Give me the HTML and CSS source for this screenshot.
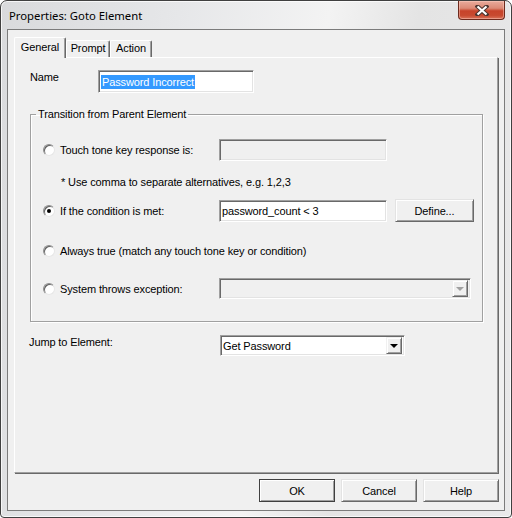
FILE: index.html
```html
<!DOCTYPE html>
<html lang="en">
<head>
    <meta charset="UTF-8">
    <meta name="viewport" content="width=device-width, initial-scale=1.0">
    <title>Properties: Goto Element</title>
    <link rel="stylesheet" href="styles.css">
</head>
<body>

    <div class="window">
        <div class="titlebar">
            <span class="title">Properties: Goto Element</span>
            <button class="close-btn" title="Close">
                <svg width="14" height="11" viewBox="0 0 14 11">
                    <path d="M2.5 1.5 L11.5 9.5 M11.5 1.5 L2.5 9.5" stroke="#4b3530" stroke-width="4.2" stroke-linecap="square"/>
                    <path d="M2.5 1.5 L11.5 9.5 M11.5 1.5 L2.5 9.5" stroke="#fff" stroke-width="2.2"/>
                </svg>
            </button>
        </div>

        <div class="client">
            <div class="tabs">
                <div class="tab active">General</div>
                <div class="tab">Prompt</div>
                <div class="tab">Action</div>
            </div>

            <div class="panel">
                <div class="name-row">
                    <span class="name-label">Name</span>
                    <div class="field name-field"><span class="selected">Password Incorrect</span></div>
                </div>

                <fieldset class="group">
                    <legend>Transition from Parent Element</legend>

                    <div class="opt-row row-touch">
                        <span class="radio"></span>
                        <span class="opt-label">Touch tone key response is:</span>
                        <div class="field text-field disabled"></div>
                    </div>

                    <div class="note">* Use comma to separate alternatives, e.g. 1,2,3</div>

                    <div class="opt-row row-cond">
                        <span class="radio checked"></span>
                        <span class="opt-label">If the condition is met:</span>
                        <div class="field text-field">password_count &lt; 3</div>
                        <button class="btn define-btn">Define...</button>
                    </div>

                    <div class="opt-row row-always">
                        <span class="radio"></span>
                        <span class="opt-label wide">Always true (match any touch tone key or condition)</span>
                    </div>

                    <div class="opt-row row-except">
                        <span class="radio"></span>
                        <span class="opt-label">System throws exception:</span>
                        <div class="field combo exception-combo disabled">
                            <span class="combo-text"></span>
                            <span class="combo-arrow"></span>
                        </div>
                    </div>
                </fieldset>

                <div class="jump-row">
                    <span class="jump-label">Jump to Element:</span>
                    <div class="field combo jump-combo">
                        <span class="combo-text">Get Password</span>
                        <span class="combo-arrow"></span>
                    </div>
                </div>
            </div>

            <div class="buttons">
                <button class="btn dlg-btn default">OK</button>
                <button class="btn dlg-btn">Cancel</button>
                <button class="btn dlg-btn">Help</button>
            </div>
        </div>
    </div>

</body>
</html>
```

FILE: styles.css
```css
* { box-sizing: border-box; }
body { margin: 0; font-family: "Liberation Sans", Arial, sans-serif; font-size: 11px; letter-spacing: -0.12px; color: #000; background: #fff; }

/* window frame */
.window { width: 512px; height: 518px; border: 1px solid #404040; border-radius: 7px 7px 4px 4px; padding: 0 6px 6px; display: flex; flex-direction: column;
    background: linear-gradient(100deg, #d9dadc 0%, #e6e7e9 30%, #f3f3f3 55%, #e4e4e4 70%, #e9e9ea 100%);
    box-shadow: inset 0 0 0 1px rgba(255, 255, 255, 0.75); }
.titlebar { height: 28px; display: flex; justify-content: space-between; align-items: flex-start; }
.title { font-family: "Segoe UI", "Noto Sans", sans-serif; font-size: 11.3px; letter-spacing: 0; line-height: 17px; padding: 6px 0 0 2px; color: #000; }
.close-btn { width: 47px; height: 19px; padding: 0; border: 1px solid #6d2a1d; border-top: none; border-radius: 0 0 4px 4px; cursor: pointer;
    display: flex; align-items: center; justify-content: center;
    background: linear-gradient(#e9ab9c 0%, #dc8a76 40%, #c7432a 55%, #c84a30 80%, #d9735a 100%);
    box-shadow: inset 0 0 0 1px rgba(255, 210, 200, 0.45); }

/* client area */
.client { flex: 1; border: 1px solid #7b7b7b; background: #f0f0f0; padding: 7px 5px 7px 6px; display: flex; flex-direction: column; }

.tabs { height: 20px; display: flex; align-items: flex-end; }
.tab { height: 17px; line-height: 15px; text-align: center; background: #f0f0f0; border-top: 1px solid #fff; border-left: 1px solid #fff; border-right: 1px solid #696969;
    box-shadow: inset -1px 0 0 #a0a0a0; border-radius: 2px 2px 0 0; }
.tab:nth-child(2) { width: 44px; }
.tab:nth-child(3) { width: 42px; }
.tab.active { width: 52px; height: 21px; line-height: 18px; margin-bottom: -1px; position: relative; z-index: 1; }

.panel { width: 484px; height: 416px; border-top: 1px solid #fff; border-left: 1px solid #fff; border-right: 1px solid #a0a0a0; border-bottom: 1px solid #a0a0a0;
    box-shadow: 1px 1px 0 #696969; padding: 0 0 0 15px; }

/* sunken edit fields */
.field { background: #fff; border-style: solid; border-width: 1px; border-color: #a0a0a0 #fff #fff #a0a0a0;
    box-shadow: inset 1px 1px 0 #696969, inset -1px -1px 0 #e3e3e3; padding: 0 2px; display: flex; align-items: center; white-space: nowrap; }
.field.disabled { background: #f0f0f0; }

.name-row { display: flex; align-items: flex-start; margin-top: 12px; }
.name-label { width: 68px; line-height: 13px; padding-top: 1px; }
.name-field { width: 156px; height: 23px; padding-left: 2px; }
.selected { background: #3399ff; color: #fff; line-height: 14px; padding: 0 1px; }

/* group box */
.group { width: 453px; margin: 15px 0 0; padding: 0 0 22px 12px; border: 1px solid #a0a0a0; box-shadow: inset 1px 1px 0 #fff, 1px 1px 0 #fff; min-width: 0; }
.group legend { line-height: 13px; padding: 0 2px; margin-left: -7px; }

.opt-row { display: flex; align-items: center; height: 22px; }
.row-touch { margin-top: 18px; }
.row-cond { margin-top: 10px; height: 23px; }
.row-always { margin-top: 18px; }
.row-except { margin-top: 16px; height: 21px; }

.radio { width: 12px; height: 12px; border-radius: 50%; margin-right: 5px; position: relative; background: #fff;
    border: 1px solid; border-color: #8d8d8d #e6e6e6 #e6e6e6 #8d8d8d; box-shadow: inset 1px 1px 0 #5f5f5f; }
.radio.checked::after { content: ""; position: absolute; left: 3px; top: 3px; width: 4px; height: 4px; border-radius: 50%; background: #000; }
.opt-label { width: 159px; }
.opt-label.wide { width: auto; }

.text-field { width: 168px; height: 22px; padding-left: 2px; }
.note { margin-top: 14px; height: 14px; line-height: 14px; padding-left: 18px; }

/* combo boxes */
.combo { justify-content: space-between; padding: 0 2px 0 2px; }
.exception-combo { width: 252px; height: 21px; }
.combo-arrow { width: 16px; height: 17px; background: #f0f0f0; border: 1px solid; border-color: #f0f0f0 #696969 #696969 #f0f0f0;
    box-shadow: inset 1px 1px 0 #fff, inset -1px -1px 0 #a0a0a0; display: flex; align-items: center; justify-content: center; }
.combo-arrow::before { content: ""; border-left: 4px solid transparent; border-right: 4px solid transparent; border-top: 4px solid #000; margin-top: 1px; }
.disabled .combo-arrow::before { border-top-color: #a0a0a0; }

.jump-row { display: flex; align-items: flex-start; margin-top: 13px; }
.jump-label { width: 191px; line-height: 13px; padding-top: 1px; margin-left: -1px; }
.jump-combo { width: 185px; height: 21px; }

/* push buttons */
.btn { font-family: "Liberation Sans", Arial, sans-serif; font-size: 11px; letter-spacing: -0.12px; color: #000; background: #f0f0f0; padding: 0; cursor: pointer;
    border: 1px solid; border-color: #e3e3e3 #696969 #696969 #e3e3e3; box-shadow: inset 1px 1px 0 #fff, inset -1px -1px 0 #a0a0a0; }
.define-btn { width: 79px; height: 23px; margin-left: 8px; }

.buttons { display: flex; justify-content: flex-end; gap: 6px; margin-top: 6px; }
.dlg-btn { width: 76px; height: 23px; }
.dlg-btn.default { border-color: #404040; }
```
